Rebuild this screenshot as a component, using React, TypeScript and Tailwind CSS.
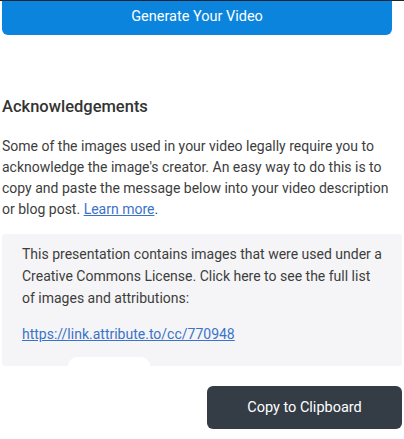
export default function App() {
  return (
    <div className="w-[404px] h-[439px] bg-white overflow-hidden font-['Roboto',_'Liberation_Sans',_sans-serif] text-[#3d3d3d]">
      <div className="h-px bg-[#1c2333]" />
      <div className="px-[2px] pr-[12px]">
        <button className="w-full h-[34px] bg-[#0a84dc] text-white text-[14.5px] rounded-b-[6px] pb-[2px]">
          Generate Your Video
        </button>
      </div>

      <div className="pl-[2px] pt-[62px]">
        <h2 className="text-[16.5px] font-medium leading-[20px] text-[#333]">Acknowledgements</h2>
        <p className="mt-[19px] text-[14px] leading-[21px] whitespace-nowrap">
          Some of the images used in your video legally require you to
          <br />
          acknowledge the image's creator. An easy way to do this is to
          <br />
          copy and paste the message below into your video description
          <br />
          or blog post.{" "}
          <a href="#" className="text-[#3a73c9] underline">
            Learn more
          </a>
          .
        </p>
      </div>

      <div className="relative mt-[14px] mx-[2px] h-[132px] bg-[#f5f5f7] rounded-[3px] pl-[20px] pt-[9px]">
        <p className="text-[14px] leading-[22px] whitespace-nowrap">
          This presentation contains images that were used under a
          <br />
          Creative Commons License. Click here to see the full list
          <br />
          of images and attributions:
        </p>
        <a href="#" className="block mt-[14px] text-[14px] leading-[22px] text-[#3a73c9] underline">
          https://link.attribute.to/cc/770948
        </a>
        <div className="absolute left-[66px] bottom-0 w-[82px] h-[9px] bg-white rounded-t-[10px]" />
      </div>

      <div className="flex justify-end pr-[2px] pt-[20px]">
        <button className="w-[195px] h-[43px] bg-[#343d46] text-white text-[14.5px] rounded-[6px]">
          Copy to Clipboard
        </button>
      </div>
    </div>
  );
}
